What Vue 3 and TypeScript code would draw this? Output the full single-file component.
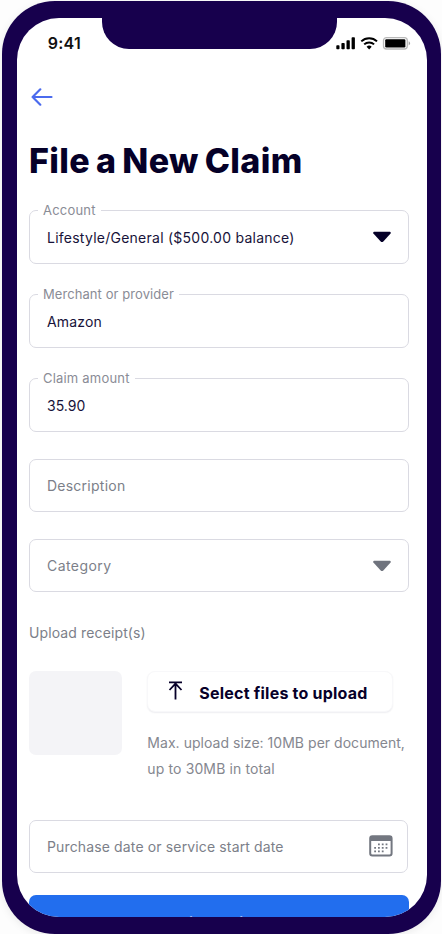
<script setup lang="ts">
interface Field {
  id: string
  label: string
  value?: string
  select?: boolean
}

const fields: Field[] = [
  { id: 'account', label: 'Account', value: 'Lifestyle/General ($500.00 balance)', select: true },
  { id: 'merchant', label: 'Merchant or provider', value: 'Amazon' },
  { id: 'amount', label: 'Claim amount', value: '35.90' },
  { id: 'description', label: 'Description' },
  { id: 'category', label: 'Category', select: true },
]
</script>

<template>
  <div class="phone">
    <div class="screen">
      <div class="notch"></div>
      <header class="status">
        <span class="time">9:41</span>
        <svg class="indicators" width="76" height="14" viewBox="0 0 76 14">
          <g fill="#000">
            <rect x="1.3" y="9.3" width="3.2" height="4" rx="0.8" />
            <rect x="6.4" y="7" width="3.3" height="6.3" rx="0.8" />
            <rect x="11.5" y="4.3" width="3.3" height="9" rx="0.8" />
            <rect x="16.6" y="1.3" width="3.3" height="12" rx="0.8" />
          </g>
          <g fill="none" stroke="#000" stroke-width="2">
            <path d="M26.3 5.4a11.3 11.3 0 0 1 15.7 0" />
            <path d="M29.2 8.4a7.1 7.1 0 0 1 9.9 0" />
          </g>
          <path d="M31.6 10.8a3.7 3.7 0 0 1 5.1 0L34.15 13.4z" fill="#000" />
          <rect x="48.5" y="1.6" width="23.8" height="11.4" rx="3" fill="none" stroke="#b9b9b9" stroke-width="1.3" />
          <rect x="50.2" y="3.2" width="20.2" height="8.2" rx="1.2" fill="#000" />
          <path d="M73.7 5.2v4.2q1.3-.6 1.3-2.1t-1.3-2.1z" fill="#a0a0a0" />
        </svg>
      </header>

      <main class="content">
        <svg class="back" width="22" height="18" viewBox="0 0 22 18" fill="none" stroke="#4b6bee" stroke-width="2.2" stroke-linecap="round" stroke-linejoin="round">
          <path d="M20.5 9H1.6M9.3 1.3 1.6 9l7.7 7.7" />
        </svg>
        <h1>File a New Claim</h1>

        <div v-for="f in fields" :key="f.id" class="field" :class="[f.id, { filled: f.value }]">
          <span v-if="f.value" class="float">{{ f.label }}</span>
          <span class="text">{{ f.value ?? f.label }}</span>
          <svg v-if="f.select" class="caret" width="20" height="12" viewBox="0 0 20 12">
            <path d="M2 .7h16q1.4.5.6 1.8L11.3 10.4q-1.3 1.2-2.6 0L1.4 2.5Q.6 1.2 2 .7z" fill="currentColor" />
          </svg>
        </div>

        <p class="section">Upload receipt(s)</p>
        <div class="upload">
          <div class="thumb"></div>
          <div class="upload-body">
            <button class="select-files">
              <svg width="15" height="19" viewBox="0 0 15 19" fill="none" stroke="currentColor" stroke-width="1.8">
                <path d="M1 1.3h13M7.5 18.4V2M1.5 9l6-6.4 6 6.4" />
              </svg>
              <span>Select files to upload</span>
            </button>
            <p class="hint"><span class="hint-main">Max. upload size: 10MB per document,</span><br />up to 30MB in total</p>
          </div>
        </div>

        <div class="field date">
          <span class="text">Purchase date or service start date</span>
          <svg class="calendar" width="24" height="22" viewBox="0 0 24 22">
            <rect x="1.2" y="1.2" width="21.4" height="19.3" rx="2.2" fill="#fff" stroke="#737780" stroke-width="2" />
            <path d="M1 5.9V3a2 2 0 0 1 2-2h17.8a2 2 0 0 1 2 2v2.9z" fill="#737780" />
            <g stroke="#737780" stroke-width="1.8" stroke-dasharray="1.8 2">
              <path d="M9 9.4h9.6M5.2 12.9h13.4M5.2 16.4h9.8" />
            </g>
          </svg>
        </div>

        <button class="submit">File Claim</button>
      </main>
    </div>
  </div>
</template>

<style>
body {
  margin: 0;
  background: #fdfdfd;
  overflow: hidden;
}
</style>

<style scoped>
.phone {
  box-sizing: border-box;
  width: 439.5px;
  height: 933px;
  margin: 1px 0 0 1.7px;
  padding: 17px 14.3px 17px 15.7px;
  border-radius: 53px;
  background: #17004d;
  box-shadow: 0 2px 8px rgba(0, 0, 0, 0.08);
  font-family: Inter, "Liberation Sans", sans-serif;
}

.screen {
  position: relative;
  height: 899px;
  overflow: hidden;
  border-radius: 42px;
  background: #fff;
}

.notch {
  position: absolute;
  top: -1px;
  left: 84.5px;
  width: 235px;
  height: 32px;
  border-radius: 0 0 27px 27px;
  background: #17004d;
}

.status {
  display: flex;
  justify-content: space-between;
  align-items: center;
  height: 50px;
  padding: 0 16px 0 30.3px;
}

.time {
  font-size: 16px;
  font-weight: 600;
  letter-spacing: 0.3px;
  color: #111;
}

.content {
  display: flex;
  flex-direction: column;
  padding: 20px 18px 0 11.6px;
}

.back {
  margin-left: 2px;
}

h1 {
  margin: 35px 0 29px;
  color: #050028;
  font-size: 34px;
  font-weight: 800;
  line-height: 40px;
  letter-spacing: 0.4px;
  word-spacing: -2px;
  white-space: nowrap;
}

.field {
  position: relative;
  display: flex;
  justify-content: space-between;
  align-items: center;
  box-sizing: border-box;
  height: 53px;
  margin-bottom: 27px;
  padding: 0 16px 0 17px;
  border: 1.3px solid #dadae2;
  border-radius: 7px;
  color: #7c7f89;
  font-size: 14px;
  line-height: 20px;
  letter-spacing: 0.25px;
}

.field.filled {
  height: 54px;
  margin-bottom: 30.2px;
  color: #17133a;
}

.field.filled .text {
  padding-top: 2px;
}

.field.amount {
  margin-bottom: 26.8px;
}

.field.merchant .text {
  letter-spacing: 0.15px;
}

.field.amount .text {
  letter-spacing: 0.05px;
}

.field.category {
  letter-spacing: 0.45px;
}

.float {
  position: absolute;
  top: -11px;
  left: 8px;
  padding: 0 5px;
  background: #fff;
  color: #8a8c96;
  font-size: 13px;
  line-height: 20px;
  letter-spacing: 0.2px;
}

.merchant .float {
  letter-spacing: 0.08px;
}

.caret {
  color: #6f737d;
}

.filled .caret {
  color: #050028;
}

.section {
  margin: 4.2px 0 0;
  color: #7c7f89;
  font-size: 14px;
  line-height: 20px;
  letter-spacing: 0.12px;
}

.upload {
  display: flex;
  gap: 25.4px;
  margin-top: 28px;
}

.thumb {
  width: 93px;
  height: 84px;
  border-radius: 7px;
  background: #f4f4f7;
}

.select-files {
  display: flex;
  align-items: center;
  gap: 16px;
  box-sizing: border-box;
  width: 246px;
  height: 41px;
  padding: 0 20px;
  border: 1px solid #f8f8fa;
  border-radius: 8px;
  background: #fff;
  box-shadow: 0 1px 1.5px rgba(20, 20, 50, 0.07);
  color: #070029;
  font: 700 16px/20px Inter, "Liberation Sans", sans-serif;
  letter-spacing: 0.22px;
  white-space: nowrap;
}

.select-files span {
  padding-top: 2px;
}

.select-files svg {
  margin-top: -2px;
}

.hint {
  margin: 17.5px 0 0;
  color: #85878f;
  font-size: 14px;
  line-height: 26.5px;
  letter-spacing: 0.12px;
  white-space: nowrap;
}

.hint-main {
  letter-spacing: 0.03px;
}

.date {
  width: 379px;
  margin: 37px 0 22px;
  padding-right: 14px;
  letter-spacing: 0.14px;
}

.date .text {
  padding-top: 1px;
}

.calendar {
  margin-top: -1px;
}

.submit {
  height: 54px;
  padding: 2px 0 0;
  border: 0;
  border-radius: 7px;
  background: #226eee;
  color: #fff;
  font: 700 16px/24px Inter, "Liberation Sans", sans-serif;
  letter-spacing: 0.4px;
}
</style>
